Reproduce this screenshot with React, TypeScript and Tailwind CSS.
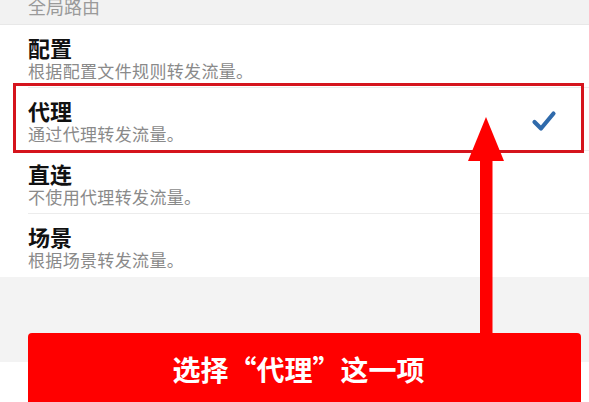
import React from "react";

const rows = [
  { t: "配置", s: "根据配置文件规则转发流量。" },
  { t: "代理", s: "通过代理转发流量。", checked: true },
  { t: "直连", s: "不使用代理转发流量。" },
  { t: "场景", s: "根据场景转发流量。", last: true },
];

export default function App() {
  return (
    <div
      className="relative w-[589px] h-[402px] overflow-hidden bg-white"
      style={{ fontFamily: '"Noto Sans CJK SC", "Noto Sans", sans-serif' }}
    >
      <div className="h-[25px] bg-[#f2f2f2] overflow-hidden pl-[28px] border-b border-[#e8e8e8]">
        <div className="text-[18px] leading-[18px] text-[#9a9a9a] mt-[-3px]">全局路由</div>
      </div>
      <div className="bg-white">
        {rows.map((r) => (
          <div key={r.t} className="pl-[28px] h-[63px]">
            <div
              className={
                "h-full flex items-start justify-between pr-[32px] " +
                (r.last ? "" : "border-b border-[#ececec]")
              }
            >
              <div className="pt-[10px] flex flex-col">
                <div className="text-[22px] leading-[24px] font-bold text-[#111]">{r.t}</div>
                <div className="text-[17px] leading-[20px] mt-[2px] text-[#8a8a8a] tracking-[0.02em]">{r.s}</div>
              </div>
              {r.checked && (
                <svg width="26" height="26" viewBox="0 0 26 26" className="mt-[20px]">
                  <path
                    d="M3.5 14 L10 20.5 L22.5 5.5"
                    fill="none"
                    stroke="#2f6aab"
                    strokeWidth="4.2"
                    strokeLinecap="round"
                    strokeLinejoin="round"
                  />
                </svg>
              )}
            </div>
          </div>
        ))}
      </div>
      <div className="h-[85px] bg-[#f3f3f3]" />

      {/* annotation box around 代理 */}
      <div className="absolute left-[13px] top-[83px] w-[571px] h-[70px] border-[3px] border-[#d5141d]" />

      {/* arrow */}
      <svg className="absolute left-0 top-0" width="589" height="402" viewBox="0 0 589 402">
        <polygon points="486,117 468,161 504,161" fill="#ff0000" />
        <rect x="480" y="160" width="12.5" height="180" fill="#ff0000" />
      </svg>

      {/* bottom label */}
      <div className="absolute left-[28px] top-[333px] w-[553px] h-[80px] rounded-[4px] bg-[#ff0000] flex justify-center pt-[17px] pr-[12px]">
        <span className="text-white font-bold text-[28px] leading-[38px]">选择“代理”这一项</span>
      </div>
    </div>
  );
}
